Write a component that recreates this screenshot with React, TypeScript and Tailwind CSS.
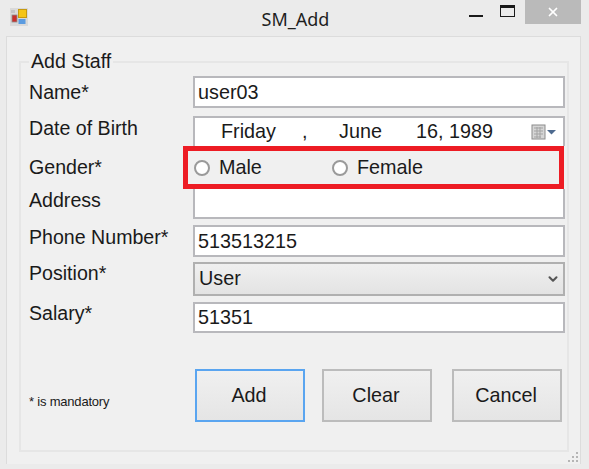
import { ChevronDown, X } from "lucide-react";

const font = { fontFamily: '"Liberation Sans", Arial, sans-serif' };

const AppIcon = () => (
  <svg width="18" height="18" viewBox="0 0 18 18" className="mt-[8px]">
    <rect width="18" height="18" fill="#d9d9d9" />
    <rect x="1" y="2" width="4" height="3" fill="#c4c4c4" />
    <rect x="2" y="7" width="5" height="7" fill="#c9302c" stroke="#8d8d8d" strokeWidth="0.8" />
    <rect x="8.5" y="1.5" width="8" height="8" fill="#f5c518" stroke="#c69a10" />
    <rect x="8.5" y="11" width="7" height="5" fill="#5b9be0" />
  </svg>
);

const CalendarIcon = () => (
  <svg width="26" height="16" viewBox="0 0 26 16">
    <rect x="1" y="1" width="13" height="14" fill="#d6d6d6" stroke="#8c8c8c" />
    <path d="M3 4h9M3 7h9M3 10h9M3 13h7M6 3v11M9 3v11" stroke="#a3a3a3" strokeWidth="1" />
    <path d="M16 6h9l-4.5 4.5z" fill="#4d6a8f" />
  </svg>
);

const Field = ({ value, height }: { value: string; height: string }) => (
  <input
    readOnly
    value={value}
    className={`${height} w-[372px] border-2 border-[#b8b8bc] bg-white pl-[3px] text-[19.8px] text-[#1a1a1a] outline-none`}
    style={font}
  />
);

const Radio = ({ label, width }: { label: string; width: string }) => (
  <div className={`${width} flex items-center`}>
    <span className="h-[16px] w-[16px] rounded-full border-2 border-[#9a9a9a] bg-white" />
    <span className="ml-[9px] text-[19.8px] text-[#1a1a1a]">{label}</span>
  </div>
);

const Row = ({ label, pad, className, children }: { label: string; pad: string; className: string; children: React.ReactNode }) => (
  <div className={`flex ${className}`}>
    <div className={`w-[164px] shrink-0 ${pad} text-[19.6px] leading-[23px] text-[#1a1a1a]`}>{label}</div>
    {children}
  </div>
);

const ActionButton = ({ label, focused, className }: { label: string; focused?: boolean; className?: string }) => (
  <button
    className={`h-[53px] w-[110px] border-2 bg-gradient-to-b from-[#f0f0f0] to-[#e5e5e5] pr-[2px] text-[19.8px] text-[#1a1a1a] ${
      focused ? "border-[#5aa5f0]" : "border-[#bcbcbc]"
    } ${className ?? ""}`}
  >
    {label}
  </button>
);

export default function App() {
  return (
    <div className="flex h-[469px] w-[589px] flex-col overflow-hidden bg-[#ebebeb]" style={font}>
      <header className="grid h-[36px] shrink-0 grid-cols-[1fr_auto_1fr] pl-[10px] pr-[8px]">
        <AppIcon />
        <div className="pt-[7px] text-[18px] leading-[24px] text-[#1f1f1f]" style={{ fontFamily: '"Noto Sans", sans-serif' }}>
          SM_Add
        </div>
        <div className="flex items-start justify-end">
          <div className="mr-[17px] mt-[15px] h-[2px] w-[14px] bg-[#1a1a1a]" />
          <div className="mr-[10px] mt-[5px] h-[12px] w-[15px] border border-t-[3px] border-[#1a1a1a]" />
          <div className="flex h-[24px] w-[56px] items-center justify-center bg-[#bababa]">
            <X size={14} strokeWidth={3} color="#ffffff" />
          </div>
        </div>
      </header>

      <main className="relative ml-[6px] h-[428px] w-[575px] shrink-0 border border-b-0 border-[#dcdcdc] bg-[#f0f0f0] pl-[12px]">
        <fieldset className="mt-[13px] h-[402px] w-[550px] border-2 border-[#e6e6e6] pl-[8px] pr-[2px] pt-[3px]">
          <legend className="ml-0 px-[2px] text-[19.6px] leading-[23px] text-[#1a1a1a]">Add Staff</legend>

          <Row label="Name*" pad="pt-[5px]" className="mb-[8px]">
            <Field value="user03" height="h-[32px]" />
          </Row>

          <Row label="Date of Birth" pad="pt-[1px]" className="">
            <div className="flex h-[30px] w-[372px] items-center border-2 border-b-0 border-[#b8b8bc] bg-white text-[19.8px] text-[#1a1a1a]">
              <span className="ml-[26px] w-[81px]">Friday</span>
              <span className="w-[37px]">,</span>
              <span className="w-[77px]">June</span>
              <span className="w-[115px]">16, 1989</span>
              <CalendarIcon />
            </div>
          </Row>

          <Row label="Gender*" pad="pt-[10px]" className="">
            <div className="-ml-[10px] flex h-[43px] w-[381px] items-center border-[5px] border-[#ed1c24] pl-[6px]">
              <Radio label="Male" width="w-[138px]" />
              <Radio label="Female" width="w-[120px]" />
            </div>
          </Row>

          <Row label="Address" pad="" className="mb-[6px]">
            <div className="h-[30px] w-[372px] border-2 border-t-0 border-[#b8b8bc] bg-white" />
          </Row>

          <Row label="Phone Number*" pad="pt-[1px]" className="mb-[5px]">
            <Field value="513513215" height="h-[32px]" />
          </Row>

          <Row label="Position*" pad="" className="mb-[6px]">
            <div className="flex h-[34px] w-[372px] items-center justify-between border-2 border-[#b0b0b0] bg-gradient-to-b from-[#f0f0f0] to-[#e3e3e3] pl-[4px] pr-[3px] text-[19.8px] text-[#1a1a1a]">
              <span>User</span>
              <ChevronDown size={14} strokeWidth={3.5} color="#555555" />
            </div>
          </Row>

          <Row label="Salary*" pad="" className="">
            <Field value="51351" height="h-[31px]" />
          </Row>

          <div className="mt-[36px] flex">
            <div className="flex h-[53px] w-[164px] shrink-0 items-end pb-[13px] text-[13px] leading-[14px] tracking-[-0.2px] text-[#1a1a1a]">
              * is mandatory
            </div>
            <div className="ml-[2px] flex">
              <ActionButton label="Add" focused />
              <ActionButton label="Clear" className="ml-[17px]" />
              <ActionButton label="Cancel" className="ml-[20px]" />
            </div>
          </div>
        </fieldset>

        <svg width="12" height="12" viewBox="0 0 12 12" className="absolute bottom-[1px] right-[1px]" fill="#b5b5b5">
          <rect x="9" y="1" width="2" height="2" />
          <rect x="5" y="5" width="2" height="2" />
          <rect x="9" y="5" width="2" height="2" />
          <rect x="1" y="9" width="2" height="2" />
          <rect x="5" y="9" width="2" height="2" />
          <rect x="9" y="9" width="2" height="2" />
        </svg>
      </main>
    </div>
  );
}
